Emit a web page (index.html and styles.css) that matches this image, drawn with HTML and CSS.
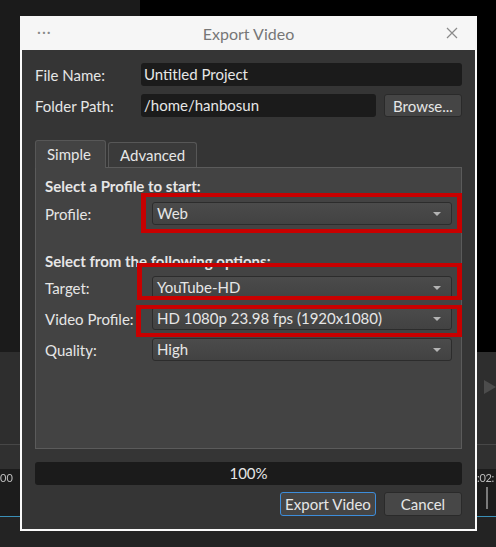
FILE: index.html
```html
<!DOCTYPE html>
<html lang="en">
<head>
    <meta charset="UTF-8">
    <meta name="viewport" content="width=device-width, initial-scale=1.0">
    <title>Export Video</title>
    <link rel="stylesheet" href="styles.css">
</head>
<body>
    <!-- editor window behind the dialog -->
    <div class="app">
        <div class="app-top">
            <div class="app-sidebar"></div>
            <div class="app-viewer"></div>
        </div>
        <div class="app-panel">
            <span class="play-btn"></span>
        </div>
        <div class="app-toolbar"></div>
        <div class="app-timeline">
            <span class="time time-start">00</span>
            <span class="time time-end">:02:</span>
            <span class="marker"></span>
        </div>
        <div class="app-bottom"></div>
    </div>

    <div class="dialog">
        <div class="titlebar">
            <span class="dots">···</span>
            <span class="title">Export Video</span>
            <svg class="close" width="12" height="12" viewBox="0 0 12 12">
                <path d="M1 1 L11 11 M11 1 L1 11" stroke="#8a8a8a" stroke-width="1.2" fill="none"/>
            </svg>
        </div>
        <div class="dialog-body">
            <div class="field-row">
                <label>File Name:</label>
                <div class="input">Untitled Project</div>
            </div>
            <div class="field-row">
                <label>Folder Path:</label>
                <div class="input">/home/hanbosun</div>
                <button class="btn browse">Browse...</button>
            </div>

            <div class="tabs">
                <div class="tab active">Simple</div>
                <div class="tab">Advanced</div>
            </div>
            <div class="pane">
                <div class="section-title">Select a Profile to start:</div>
                <div class="form-grid first">
                    <label>Profile:</label>
                    <div class="select">Web</div>
                </div>
                <div class="section-title second">Select from the following options:</div>
                <div class="form-grid">
                    <label>Target:</label>
                    <div class="select">YouTube-HD</div>
                    <label>Video Profile:</label>
                    <div class="select">HD 1080p 23.98 fps (1920x1080)</div>
                    <label>Quality:</label>
                    <div class="select">High</div>
                </div>

                <!-- highlight marks -->
                <div class="mark mark-profile"></div>
                <div class="mark mark-target"></div>
                <div class="mark mark-video"></div>
            </div>

            <div class="progress">100%</div>
            <div class="actions">
                <button class="btn primary">Export Video</button>
                <button class="btn cancel">Cancel</button>
            </div>
        </div>
    </div>
</body>
</html>
```

FILE: styles.css
```css
* {
    box-sizing: border-box;
}
body {
    margin: 0;
    width: 496px;
    height: 547px;
    overflow: hidden;
    background: #000;
    font-family: Lato, "Noto Sans", sans-serif;
    font-size: 15px;
    color: #e6e6e6;
}

/* background editor */
.app {
    position: fixed;
    inset: 0;
    display: flex;
    flex-direction: column;
}
.app-top {
    height: 352px;
    display: flex;
}
.app-sidebar {
    width: 140px;
    background: #1b1b1b;
}
.app-viewer {
    flex: 1;
    background: #000;
}
.app-panel {
    height: 93px;
    background: #2e2e2e;
    border-bottom: 1px solid #474747;
    position: relative;
}
.play-btn {
    position: absolute;
    right: 0;
    top: 28px;
    width: 0;
    height: 0;
    border-top: 7px solid transparent;
    border-bottom: 7px solid transparent;
    border-left: 12px solid #4c4c4c;
}
.app-toolbar {
    height: 24px;
    background: #303030;
}
.app-timeline {
    height: 48px;
    background: #1c1c1c;
    border-bottom: 1px solid #3a8fb7;
    position: relative;
}
.time {
    position: absolute;
    top: 2px;
    font-size: 11px;
    color: #bdbdbd;
}
.time-start {
    left: 0;
}
.time-end {
    left: 477px;
    letter-spacing: -0.3px;
}
.marker {
    position: absolute;
    left: 486px;
    top: 18px;
    width: 2px;
    height: 22px;
    background: #7a7a7a;
}
.app-bottom {
    flex: 1;
    background: #232323;
}

/* dialog window */
.dialog {
    position: absolute;
    left: 20px;
    top: 16px;
    width: 457px;
    height: 515px;
    border: 2px solid #fafafa;
    border-top: none;
    background: #353535;
}
.titlebar {
    height: 34px;
    margin: 0 -2px;
    background: #f6f6f6;
    border-radius: 2px 2px 0 0;
    position: relative;
    display: flex;
    align-items: center;
    justify-content: center;
}
.dots {
    position: absolute;
    left: 17px;
    top: 6px;
    font-size: 15px;
    color: #888;
    letter-spacing: 1px;
}
.title {
    font-size: 16px;
    color: #777;
}
.close {
    position: absolute;
    right: 19px;
    top: 11px;
}
.dialog-body {
    padding: 13px;
}

.field-row {
    display: flex;
    align-items: center;
    gap: 8px;
    height: 23px;
    margin-bottom: 8px;
}
.field-row label {
    width: 98px;
    flex: none;
}
.input {
    flex: 1;
    height: 23px;
    line-height: 23px;
    padding-left: 3px;
    background: #1b1b1b;
    border-radius: 3px;
}

.btn {
    font-family: inherit;
    font-size: 15px;
    color: #e6e6e6;
    background: #454545;
    border: 1px solid #2a2a2a;
    border-radius: 3px;
    height: 24px;
    padding: 0;
}
.browse {
    width: 78px;
    height: 23px;
}

/* tabs */
.tabs {
    display: flex;
    align-items: flex-end;
    gap: 2px;
    margin-top: 23px;
    height: 27px;
    position: relative;
    z-index: 1;
}
.tab {
    height: 25px;
    line-height: 24px;
    background: #3a3a3a;
    border: 1px solid #575757;
    border-bottom: none;
    border-radius: 3px 3px 0 0;
    padding: 0 11px;
}
.tab:nth-child(2) {
    width: 89px;
}
.tab.active {
    width: 71px;
    height: 28px;
    line-height: 27px;
    margin-bottom: -1px;
    background: #434343;
}
.pane {
    position: relative;
    height: 282px;
    background: #434343;
    border: 1px solid #5b5b5b;
    padding: 9px 9px 0 9px;
}
.section-title {
    font-weight: bold;
    line-height: 18px;
    height: 18px;
}
.section-title.second {
    margin-top: 27px;
}
.form-grid {
    display: grid;
    grid-template-columns: 107px 1fr;
    row-gap: 8px;
    align-items: center;
    margin-top: 6px;
}
.form-grid.first {
    margin-top: 7px;
}
.form-grid label {
    white-space: nowrap;
}
.select {
    height: 23px;
    line-height: 21px;
    padding-left: 4px;
    border: 1px solid #2c2c2c;
    border-radius: 3px;
    background: linear-gradient(#4b4b4b, #424242);
    position: relative;
}
.select::after {
    content: "";
    position: absolute;
    right: 10px;
    top: 9px;
    border-left: 4px solid transparent;
    border-right: 4px solid transparent;
    border-top: 4px solid #b4b4b4;
}

.mark {
    position: absolute;
    border: 5px solid #c80000;
    border-top-width: 4px;
    border-bottom-width: 4px;
}
.mark-profile {
    left: 105px;
    top: 25px;
    width: 321px;
    height: 40px;
}
.mark-target {
    left: 101px;
    top: 95px;
    width: 325px;
    height: 37px;
}
.mark-video {
    left: 100px;
    top: 137px;
    width: 326px;
    height: 32px;
}

/* progress and buttons */
.progress {
    margin-top: 13px;
    height: 23px;
    line-height: 23px;
    text-align: center;
    background: #1b1b1b;
    border-radius: 3px;
}
.actions {
    display: flex;
    justify-content: flex-end;
    gap: 8px;
    margin-top: 7px;
}
.primary {
    width: 96px;
    border-color: #3d8ddb;
}
.cancel {
    width: 78px;
    background: #474747;
}
```
